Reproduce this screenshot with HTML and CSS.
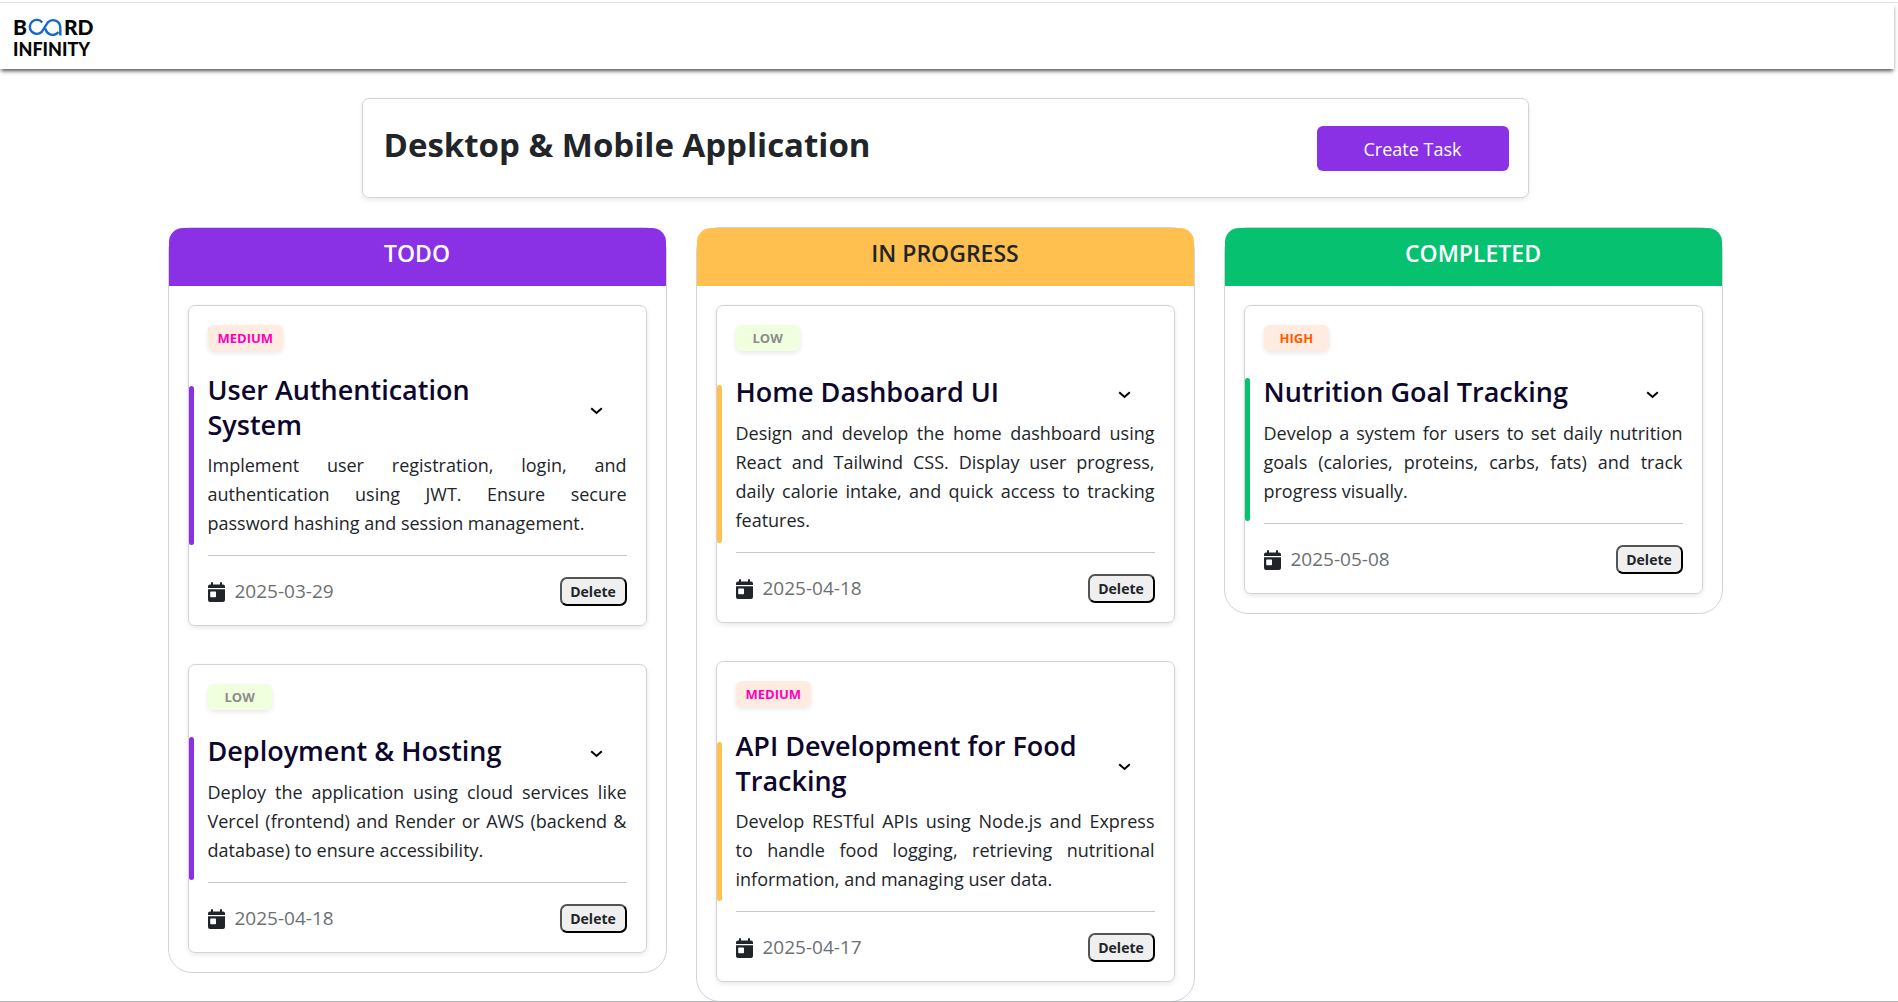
FILE: index.html
```html
<!DOCTYPE html>
<html lang="en">
<head>
<meta charset="utf-8">
<meta name="viewport" content="width=device-width, initial-scale=1">
<title>Board Infinity</title>
<link rel="stylesheet" href="styles.css">
</head>
<body>
<svg class="sprite" aria-hidden="true">
  <symbol id="chevron" viewBox="0 0 13 8"><path d="M1.2 1.2 6.5 6l5.3-4.8" fill="none" stroke="#000" stroke-width="2"/></symbol>
  <symbol id="calendar" viewBox="0 0 17 20"><path fill="#212529" fill-rule="evenodd" d="M0 6V4.500q0-2 2-2h1V1q0-1 1-1t1 1v1.500h7V1q0-1 1-1t1 1v1.500h1q2 0 2 2V6zM0 7.300h17V18q0 2-2 2H2q-2 0-2-2zM3 9.500q-.8 0-.8.800v4.200q0 .800.800.800h4.200q.800 0 .800-.800v-4.200q0-.800-.800-.800z"/></symbol>
</svg>
<div class="app">
<header class="navbar">
  <a class="brand" href="#" aria-label="Board Infinity">
    <span class="brand-line brand-top">B<svg class="brand-mark" viewBox="0 0 34 18" aria-hidden="true"><path d="M14.200 4.400A7 7 0 1 0 13.800 13.800L19.800 4.400A7.300 7.300 0 0 1 32.300 9V17.500M17.500 10.500A7.300 7.300 0 0 0 30.500 14" fill="none" stroke="#1268d3" stroke-width="2.400"/></svg>RD</span>
    <span class="brand-line">INFINITY</span>
  </a>
</header>
<main class="page">
  <section class="project">
    <h1 class="project-title">Desktop &amp; Mobile Application</h1>
    <button class="create" type="button">Create Task</button>
  </section>
  <div class="board">
    <section class="column todo">
      <h2 class="column-title">TODO</h2>
      <div class="cards">
        <article class="card">
          <span class="badge medium">MEDIUM</span>
          <div class="card-head"><h3 class="card-title">User Authentication System</h3><button class="toggle" type="button" aria-label="Toggle details"><svg class="chevron"><use href="#chevron"/></svg></button></div>
          <p class="card-text">Implement user registration, login, and authentication using JWT. Ensure secure password hashing and session management.</p>
          <div class="card-foot"><span class="date"><svg class="calendar"><use href="#calendar"/></svg><time>2025-03-29</time></span><button class="delete" type="button">Delete</button></div>
        </article>
        <article class="card">
          <span class="badge low">LOW</span>
          <div class="card-head"><h3 class="card-title">Deployment &amp; Hosting</h3><button class="toggle" type="button" aria-label="Toggle details"><svg class="chevron"><use href="#chevron"/></svg></button></div>
          <p class="card-text">Deploy the application using cloud services like Vercel (frontend) and Render or AWS (backend &amp; database) to ensure accessibility.</p>
          <div class="card-foot"><span class="date"><svg class="calendar"><use href="#calendar"/></svg><time>2025-04-18</time></span><button class="delete" type="button">Delete</button></div>
        </article>
      </div>
    </section>
    <section class="column progress">
      <h2 class="column-title">IN PROGRESS</h2>
      <div class="cards">
        <article class="card">
          <span class="badge low">LOW</span>
          <div class="card-head"><h3 class="card-title">Home Dashboard UI</h3><button class="toggle" type="button" aria-label="Toggle details"><svg class="chevron"><use href="#chevron"/></svg></button></div>
          <p class="card-text">Design and develop the home dashboard using React and Tailwind CSS. Display user progress, daily calorie intake, and quick access to tracking features.</p>
          <div class="card-foot"><span class="date"><svg class="calendar"><use href="#calendar"/></svg><time>2025-04-18</time></span><button class="delete" type="button">Delete</button></div>
        </article>
        <article class="card">
          <span class="badge medium">MEDIUM</span>
          <div class="card-head"><h3 class="card-title">API Development for Food Tracking</h3><button class="toggle" type="button" aria-label="Toggle details"><svg class="chevron"><use href="#chevron"/></svg></button></div>
          <p class="card-text">Develop RESTful APIs using Node.js and Express to handle food logging, retrieving nutritional information, and managing user data.</p>
          <div class="card-foot"><span class="date"><svg class="calendar"><use href="#calendar"/></svg><time>2025-04-17</time></span><button class="delete" type="button">Delete</button></div>
        </article>
      </div>
    </section>
    <section class="column completed">
      <h2 class="column-title">COMPLETED</h2>
      <div class="cards">
        <article class="card">
          <span class="badge high">HIGH</span>
          <div class="card-head"><h3 class="card-title">Nutrition Goal Tracking</h3><button class="toggle" type="button" aria-label="Toggle details"><svg class="chevron"><use href="#chevron"/></svg></button></div>
          <p class="card-text">Develop a system for users to set daily nutrition goals (calories, proteins, carbs, fats) and track progress visually.</p>
          <div class="card-foot"><span class="date"><svg class="calendar"><use href="#calendar"/></svg><time>2025-05-08</time></span><button class="delete" type="button">Delete</button></div>
        </article>
      </div>
    </section>
  </div>
</main>
</div>
</body>
</html>
```
FILE: styles.css
```css
* {
  box-sizing: border-box;
}

body {
  margin: 0;
  padding-top: 2px;
  background: #fff;
  color: #212529;
  font: 400 18px/29px "Open Sans", "Noto Sans", sans-serif;
}

/* hairline along the bottom edge of the window */
body::after {
  content: "";
  position: fixed;
  inset: auto 0 0;
  height: 1px;
  background: #b8b8bc;
}

h1, h2, h3, p {
  margin: 0;
}

button {
  font-family: inherit;
  cursor: pointer;
}

.sprite {
  display: none;
}

.app {
  padding-right: 4px;
  border-top: 1px solid #e2e2e2;
}

.navbar {
  display: flex;
  height: 66px;
  padding: 13px;
  box-shadow: 0 3px 4px -1px #000000b0;
}

.brand {
  color: #050505;
  font: 900 18px/22px Lato, sans-serif;
  text-decoration: none;
}

.brand-line {
  display: flex;
  align-items: center;
}

.brand-top {
  font-size: 21px;
}

.brand-mark {
  width: 34px;
  height: 18px;
  margin: 0 2px 0 1px;
}

.page {
  padding: 29px 28px 0 24px;
}

.project {
  display: flex;
  align-items: center;
  justify-content: space-between;
  max-width: 1167px;
  height: 100px;
  margin: 0 auto 29px;
  padding: 0 19px 0 21px;
  border: 1px solid #d3d3d3;
  border-radius: 7px;
  box-shadow: 0 2px 5px #00000018;
}

.project-title {
  font-size: 33px;
  line-height: 40px;
  font-weight: 700;
  padding-bottom: 6px;
}

.create {
  width: 192px;
  height: 45px;
  padding: 2px 0 0;
  border: 0;
  border-radius: 6px;
  background: #8a30e5;
  color: #fff;
  font-size: 18px;
}

.board {
  display: grid;
  grid-template-columns: repeat(3, 1fr);
  gap: 29px;
  align-items: start;
  max-width: 1555px;
  margin: 0 auto;
}

.column {
  --accent: #8a30e5;
  border: 1px solid #d3d3d3;
  border-radius: 24px;
}

.progress {
  --accent: #ffc04f;
}

.completed {
  --accent: #06c270;
}

.column-title {
  height: 58px;
  padding-top: 9px;
  border-radius: 14px 14px 0 0;
  background: var(--accent);
  color: #fff;
  font-size: 23px;
  line-height: 32px;
  font-weight: 600;
  text-align: center;
}

.progress .column-title {
  color: #212529;
}

.cards {
  display: grid;
  gap: 38px;
  padding: 19px;
}

.card {
  position: relative;
  padding: 19px;
  border: 1px solid #d3d3d3;
  border-radius: 7px;
  box-shadow: 0 2px 5px #00000018;
}

.card::before {
  content: "";
  position: absolute;
  top: 25%;
  left: 0;
  width: 5px;
  height: 50%;
  border-radius: 3px;
  background: var(--accent);
}

.badge {
  display: block;
  width: fit-content;
  height: 26px;
  margin-bottom: 21px;
  padding: 0 10px;
  border-radius: 6px;
  box-shadow: 0 2px 5px #00000018;
  font-size: 13px;
  line-height: 26px;
  font-weight: 700;
}

.medium {
  background: #ffebe0;
  color: #ff00b8;
}

.low {
  padding: 0 17px;
  background: #f0ffde;
  color: #8c8c8c;
}

.high {
  padding: 0 16px;
  background: #ffebe0;
  color: #ff5c00;
}

.card-head {
  display: flex;
  align-items: center;
  justify-content: space-between;
  min-height: 38px;
  margin-bottom: 9px;
  color: #0d062d;
}

.card-title {
  max-width: 356px;
  font-size: 27px;
  line-height: 35px;
  font-weight: 600;
}

.toggle {
  display: flex;
  padding: 7px 24px 0 0;
  border: 0;
  background: none;
}

.chevron {
  width: 13px;
  height: 8px;
}

.card-text {
  margin-bottom: 17px;
  font-size: 18px;
  text-align: justify;
}

.card-foot {
  display: flex;
  align-items: center;
  justify-content: space-between;
  padding-top: 21px;
  border-top: 1px solid #c8c8c8;
}

.date {
  display: flex;
  align-items: center;
  gap: 10px;
  color: #6c6f73;
  font-size: 19px;
}

.calendar {
  width: 17px;
  height: 20px;
}

.delete {
  width: 67px;
  height: 29px;
  padding: 0;
  border: 2px outset #000;
  border-radius: 7px;
  background: #efefef;
  color: #212529;
  font-size: 14px;
  font-weight: 700;
}
```
